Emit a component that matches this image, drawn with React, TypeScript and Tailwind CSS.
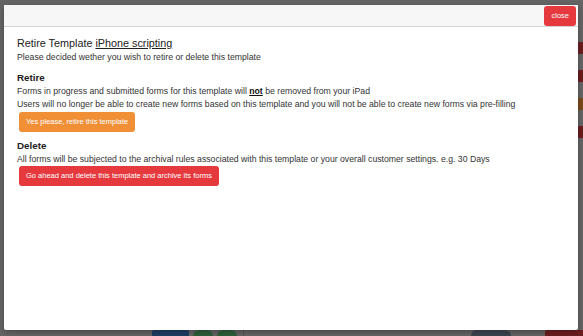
export default function App() {
  return (
    <div className="relative h-[336px] w-[583px] overflow-hidden bg-[#656565] font-['Liberation_Sans',Arial,sans-serif]">
      {/* dimmed page behind the modal */}
      <div className="absolute bottom-0 left-[152px] flex h-[6px] items-end gap-[4px]">
        <div className="h-[6px] w-[37px] rounded-t-[2px] bg-[#1d3f63]" />
        <div className="h-[6px] w-[20px] rounded-t-full bg-[#2e5f3a]" />
        <div className="h-[6px] w-[20px] rounded-t-full bg-[#2e5f3a]" />
        <div className="ml-[2px] h-[6px] w-[70px] border-l border-[#555]" />
        <div className="h-[6px] w-[150px]" />
        <div className="h-[6px] w-[40px] rounded-t-full bg-[#3b4550]" />
        <div className="ml-[30px] h-[6px] w-[44px] rounded-t-[2px] bg-[#6b1d1f]" />
      </div>
      <div className="absolute right-0 top-[42px] flex w-[5px] flex-col gap-[16px]">
        <div className="h-[12px] bg-[#6b1d1f]" />
        <div className="h-[12px] bg-[#6b1d1f]" />
        <div className="h-[12px] bg-[#7a4a1a]" />
        <div className="h-[12px] bg-[#6b1d1f]" />
      </div>

      {/* modal */}
      <div className="absolute left-[4px] top-[5px] flex h-[325px] w-[574px] flex-col rounded-[2px] bg-white shadow-[0_2px_6px_rgba(0,0,0,0.3)]">
        <div className="flex h-[22px] items-center justify-end border-b border-[#d5d5d5] bg-[#f7f7f7] pr-[2px]">
          <button className="h-[20px] rounded-[3px] bg-[#e5393d] px-[7px] text-[7.5px] text-white">close</button>
        </div>
        <div className="px-[13px] pt-[9px] text-[#222]">
          <h1 className="text-[10.8px] leading-[14px]">
            Retire Template <span className="underline">iPhone scripting</span>
          </h1>
          <p className="mt-[1px] text-[8.7px] leading-[12px] text-[#333]">
            Please decided wether you wish to retire or delete this template
          </p>

          <h2 className="mt-[8px] text-[9.8px] font-bold leading-[14px]">Retire</h2>
          <p className="text-[8.7px] leading-[13px] text-[#333]">
            Forms in progress and submitted forms for this template will{" "}
            <b className="underline text-[#111]">not</b> be removed from your iPad
          </p>
          <p className="text-[8.7px] leading-[13px] text-[#333]">
            Users will no longer be able to create new forms based on this template and you will not be able to create new forms via pre-filling
          </p>
          <button className="ml-[2px] mt-[1px] block h-[20px] rounded-[3px] bg-[#f18f37] px-[7px] text-[7.5px] text-white">
            Yes please, retire this template
          </button>

          <h2 className="mt-[7px] text-[9.8px] font-bold leading-[14px]">Delete</h2>
          <p className="text-[8.7px] leading-[13px] text-[#333]">
            All forms will be subjected to the archival rules associated with this template or your overall customer settings. e.g. 30 Days
          </p>
          <button className="ml-[2px] block h-[20px] rounded-[3px] bg-[#e5393d] px-[7px] text-[7.5px] text-white">
            Go ahead and delete this template and archive its forms
          </button>
        </div>
      </div>
    </div>
  );
}
